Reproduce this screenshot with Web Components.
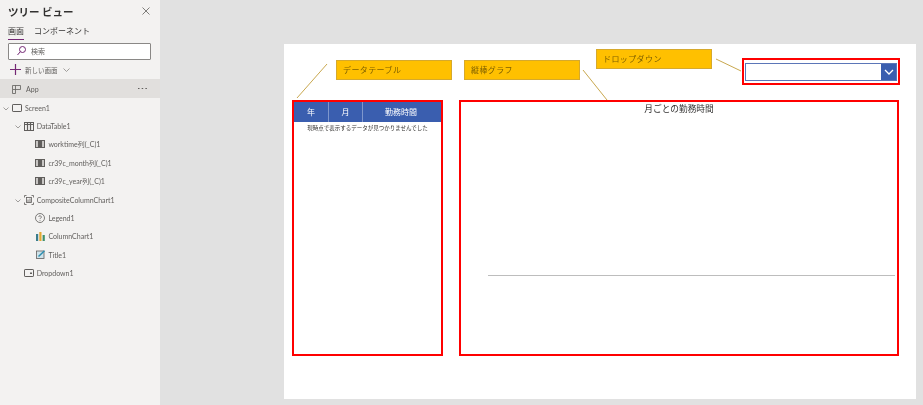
<!DOCTYPE html>
<html lang="ja">
<head>
<meta charset="utf-8">
<title>ツリー ビュー</title>
<style>
  html, body { margin: 0; height: 100%; }
  body {
    display: flex;
    width: 923px;
    height: 405px;
    overflow: hidden;
    background: #e1e1e1;
    font-family: Lato, "Noto Sans CJK JP", sans-serif;
  }
  svg { display: block; }
</style>
</head>
<body>
<tree-view>
  <tree-row depth="0" label="Screen1" chevron>
    <svg slot="icon" width="10" height="8" viewBox="0 0 10 8"><rect x=".5" y=".5" width="9" height="7" rx=".6" fill="none" stroke="#605e5c"/></svg>
  </tree-row>
  <tree-row depth="1" label="DataTable1" chevron>
    <svg slot="icon" width="10" height="9" viewBox="0 0 10 9"><rect x=".5" y=".5" width="9" height="8" fill="none" stroke="#605e5c"/><path d="M0 2.5h10M3.500 0v9M6.500 0v9" stroke="#605e5c" stroke-width="1.200"/></svg>
  </tree-row>
  <tree-row depth="2" label="worktime列(_C)1">
    <svg slot="icon" width="10" height="8" viewBox="0 0 10 8"><rect width="10" height="8" fill="#605e5c"/><rect x="1" y="1" width="2" height="6" fill="#c8c6c4"/><rect x="7" y="1" width="2" height="6" fill="#c8c6c4"/></svg>
  </tree-row>
  <tree-row depth="2" label="cr39c_month列(_C)1">
    <svg slot="icon" width="10" height="8" viewBox="0 0 10 8"><rect width="10" height="8" fill="#605e5c"/><rect x="1" y="1" width="2" height="6" fill="#c8c6c4"/><rect x="7" y="1" width="2" height="6" fill="#c8c6c4"/></svg>
  </tree-row>
  <tree-row depth="2" label="cr39c_year列(_C)1">
    <svg slot="icon" width="10" height="8" viewBox="0 0 10 8"><rect width="10" height="8" fill="#605e5c"/><rect x="1" y="1" width="2" height="6" fill="#c8c6c4"/><rect x="7" y="1" width="2" height="6" fill="#c8c6c4"/></svg>
  </tree-row>
  <tree-row depth="1" label="CompositeColumnChart1" chevron>
    <svg slot="icon" width="10" height="10" viewBox="0 0 10 10"><path d="M.5 2.500v-2h2M7.500.5h2v2M9.500 7.500v2h-2M2.500 9.500h-2v-2" fill="none" stroke="#605e5c" stroke-width=".8"/><rect x="2.500" y="2.500" width="5" height="5" fill="none" stroke="#605e5c" stroke-width=".8"/><path d="M4 4.500v3M6 3.500v4" stroke="#605e5c" stroke-width=".8"/></svg>
  </tree-row>
  <tree-row depth="2" label="Legend1">
    <svg slot="icon" width="10" height="10" viewBox="0 0 10 10"><circle cx="5" cy="5" r="4.500" fill="none" stroke="#605e5c" stroke-width=".8"/><path d="M3.700 4a1.300 1.300 0 1 1 1.900 1.200c-.4.200-.6.400-.6.900M5 7v.8" fill="none" stroke="#605e5c" stroke-width=".8"/></svg>
  </tree-row>
  <tree-row depth="2" label="ColumnChart1">
    <svg slot="icon" width="9" height="9" viewBox="0 0 9 9"><rect y="2" width="2.200" height="7" fill="#3a7d8c"/><rect x="3.300" y="0" width="2.200" height="9" fill="#e3a72f"/><rect x="6.600" y="3" width="2.200" height="6" fill="#3f8f6b"/></svg>
  </tree-row>
  <tree-row depth="2" label="Title1">
    <svg slot="icon" width="9" height="9" viewBox="0 0 9 9"><rect x=".5" y="1" width="7.500" height="7.500" fill="#cfe3ea" stroke="#605e5c" stroke-width=".8"/><path d="M2.500 6.500 8.500.8" stroke="#2f8fb0" stroke-width="1.500"/></svg>
  </tree-row>
  <tree-row depth="1" label="Dropdown1">
    <svg slot="icon" width="10" height="8" viewBox="0 0 10 8"><rect x=".5" y=".5" width="9" height="7" rx=".6" fill="none" stroke="#605e5c"/><rect x="6" y="3.500" width="2" height="1.500" fill="#605e5c"/></svg>
  </tree-row>
</tree-view>

<design-stage>
  <call-out style="left:52px;top:16px">データテーブル</call-out>
  <call-out style="left:180px;top:16px">縦棒グラフ</call-out>
  <call-out style="left:312px;top:5px">ドロップダウン</call-out>
  <leader-lines></leader-lines>
  <data-table style="left:8px;top:56px"></data-table>
  <chart-panel style="left:175px;top:56px"></chart-panel>
  <drop-down style="left:458px;top:14px"></drop-down>
</design-stage>

<script>
  function define(name, css, html) {
    class Comp extends HTMLElement {
      constructor() {
        super();
        this.attachShadow({ mode: 'open' });
      }
      connectedCallback() {
        this.shadowRoot.innerHTML = `<style>${css}</style>${typeof html === 'function' ? html(this) : html}`;
      }
    }
    customElements.define(name, Comp);
  }

  define('tree-view', `
    :host {
      display: flex;
      flex-direction: column;
      flex: none;
      box-sizing: border-box;
      width: 160px;
      height: 405px;
      background: #f3f2f1;
      color: #323130;
      filter: blur(.3px);
    }
    header { display: flex; justify-content: space-between; align-items: center; padding: 4px 10px 0 8px; height: 16px; }
    header svg { margin-top: -3px; }
    h1 { margin: 0; font-size: 10.500px; font-weight: 700; line-height: 16px; }
    nav { display: flex; gap: 10px; padding: 3px 8px 0; font-size: 8px; line-height: 12px; height: 17px; box-sizing: border-box; margin-top: 2px; }
    nav span { height: 14px; }
    nav .on { border-bottom: 1px solid #742774; }
    .search { display: flex; align-items: center; gap: 5px; box-sizing: border-box; height: 17px; margin: 4px 9px 0 8px; padding: 0 0 2px 8px; background: #fff; border: 1px solid #8a8886; border-radius: 1px; font-size: 7px; color: #605e5c; }
    .add { display: flex; align-items: center; height: 19px; padding-left: 10px; font-size: 6.500px; color: #605e5c; }
    .add span { margin: 0 5px 0 4px; }
    .app { display: flex; align-items: center; height: 19px; padding: 1px 13px 0 12px; box-sizing: border-box; background: #e1dfdd; font-size: 7px; color: #605e5c; }
    .app span { flex: 1; margin-left: 5px; }
    .tree { padding-top: .5px; }
  `, `
    <header>
      <h1>ツリー ビュー</h1>
      <svg width="8" height="8" viewBox="0 0 8 8"><path d="M.5.500l7 7M7.500.500l-7 7" stroke="#605e5c" stroke-width=".8"/></svg>
    </header>
    <nav><span class="on">画面</span><span>コンポーネント</span></nav>
    <div class="search">
      <svg width="9" height="10" viewBox="0 0 9 10"><circle cx="5.500" cy="3.500" r="3" fill="none" stroke="#742774"/><path d="M3.300 5.700.5 9" stroke="#742774"/></svg>
      検索
    </div>
    <div class="add">
      <svg width="11" height="11" viewBox="0 0 11 11"><path d="M5.500 0v11M0 5.500h11" stroke="#742774" stroke-width="1.200"/></svg>
      <span>新しい画面</span>
      <svg width="7" height="4" viewBox="0 0 7 4"><path d="M.5.500l3 3 3-3" fill="none" stroke="#8a8886" stroke-width=".8"/></svg>
    </div>
    <div class="app">
      <svg width="9" height="9" viewBox="0 0 9 9"><path d="M.5.500h8v4h-8zM.5 4.500v4h3v-4M3.500.500v4" fill="none" stroke="#605e5c" stroke-width=".8"/></svg>
      <span>App</span>
      <svg width="9" height="2" viewBox="0 0 9 2"><path d="M0 .5h1.500M3.700 .5h1.500M7.400 .5h1.500" stroke="#605e5c"/></svg>
    </div>
    <div class="tree"><slot></slot></div>
  `);

  define('tree-row', `
    :host { display: flex; align-items: center; height: 18.400px; font-size: 7px; color: #605e5c; white-space: nowrap; }
    .chev { width: 6px; margin-right: 3px; flex: none; }
    .icon { width: 10px; margin-right: 3px; flex: none; display: flex; justify-content: center; }
  `, (el) => {
    const depth = Number(el.getAttribute('depth'));
    const chev = el.hasAttribute('chevron')
      ? '<svg width="6" height="4" viewBox="0 0 6 4"><path d="M.5.500l2.500 2.500 2.500-2.500" fill="none" stroke="#8a8886" stroke-width=".8"/></svg>'
      : '';
    return `<span style="width:${3 + depth * 11.7}px;flex:none"></span>
      <span class="chev">${chev}</span>
      <span class="icon"><slot name="icon"></slot></span>
      <span>${el.getAttribute('label')}</span>`;
  });

  define('design-stage', `
    :host { display: block; position: relative; flex: none; width: 632px; height: 355px; margin: 44px 0 0 124px; background: #fff; filter: blur(.3px); }
  `, '<slot></slot>');

  define('call-out', `
    :host { position: absolute; display: flex; align-items: center; box-sizing: border-box; width: 116px; height: 20px; padding: 0 0 2px 6px; background: #ffc000; border: 1px solid #d6a92c; color: #7f6000; font-size: 8px; letter-spacing: .4px; }
  `, '<slot></slot>');

  define('leader-lines', `
    :host { position: absolute; inset: 0; pointer-events: none; }
    svg { display: block; }
  `, `<svg width="632" height="355" viewBox="0 0 632 355" fill="none" stroke="#c9a84f" stroke-width="1">
    <path d="M43 20 13 54M299 26l24 30M432 15l25 12"/>
  </svg>`);

  define('data-table', `
    :host { position: absolute; display: block; box-sizing: border-box; width: 151px; height: 256px; border: 2px solid #f00; color: #323130; }
    .head { display: grid; grid-template-columns: 35px 34px 1fr; height: 20px; background: #3a5eaf; color: #fff; font-size: 8px; }
    .head span { display: flex; align-items: center; justify-content: center; padding-bottom: 1px; border-right: 1px solid #7f97cc; }
    .head span:last-child { border-right: 0; padding-right: 2px; }
    .empty { margin-top: 1.500px; text-align: center; font-size: 5.500px; line-height: 8px; color: #323130; }
  `, `
    <div class="head"><span>年</span><span>月</span><span>勤務時間</span></div>
    <div class="empty">現時点で表示するデータが見つかりませんでした</div>
  `);

  define('chart-panel', `
    :host { position: absolute; display: block; box-sizing: border-box; width: 440px; height: 256px; border: 2px solid #f00; }
    h2 { margin: 0; padding-top: 1px; text-align: center; font-size: 8.700px; font-weight: 400; line-height: 12px; color: #323130; }
    .plot { height: 1px; margin: 159px 2px 0 27px; border-bottom: 1px solid #bdbdbd; }
  `, `<h2>月ごとの勤務時間</h2><div class="plot"></div>`);

  define('drop-down', `
    :host { position: absolute; display: block; box-sizing: border-box; width: 158px; height: 27px; padding: 3px 1px 2px 1px; border: 2px solid #f00; }
    .box { display: flex; justify-content: flex-end; box-sizing: border-box; height: 18px; border: 1.500px solid #5b76b8; background: #fff; }
    .btn { display: flex; align-items: center; justify-content: center; width: 15px; background: #3a5eaf; }
  `, `<div class="box"><div class="btn"><svg width="10" height="7" viewBox="0 0 10 7"><path d="M1 1l4 4 4-4" fill="none" stroke="#fff" stroke-width="1.300"/></svg></div></div>`);
</script>
</body>
</html>
